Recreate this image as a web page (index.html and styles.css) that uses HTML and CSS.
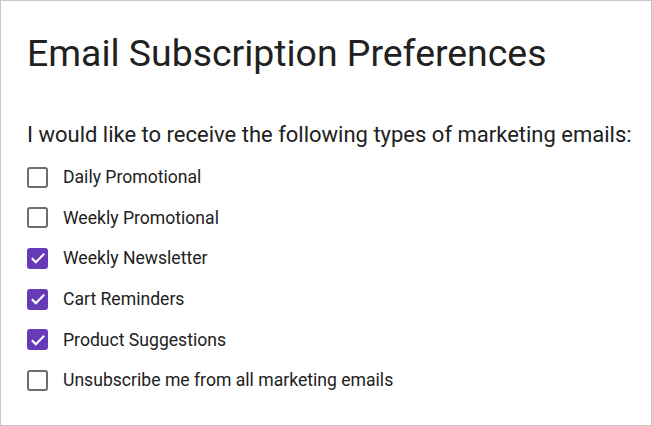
FILE: index.html
```html
<!doctype html>
<html>
<head>
<title>Email Subscription Preferences</title>
<link rel="stylesheet" href="styles.css">
</head>
<body>
<div class="frame">
  <h1 class="title">Email Subscription Preferences</h1>
  <p class="lead">I would like to receive the following types of marketing emails:</p>
  <ul class="options">
    <li class="option"><span class="box"></span>Daily Promotional</li>
    <li class="option"><span class="box"></span>Weekly Promotional</li>
    <li class="option"><span class="box checked"><svg viewBox="0 0 24 24"><path d="M4.6 12.2l4.8 4.8 10-10"/></svg></span>Weekly Newsletter</li>
    <li class="option"><span class="box checked"><svg viewBox="0 0 24 24"><path d="M4.6 12.2l4.8 4.8 10-10"/></svg></span>Cart Reminders</li>
    <li class="option"><span class="box checked"><svg viewBox="0 0 24 24"><path d="M4.6 12.2l4.8 4.8 10-10"/></svg></span>Product Suggestions</li>
    <li class="option"><span class="box"></span>Unsubscribe me from all marketing emails</li>
  </ul>
</div>
</body>
</html>
```
FILE: styles.css
```css
html, body {
  margin: 0;
  height: 100%;
}

body {
  font-family: Roboto, "Liberation Sans", sans-serif;
  color: #212121;
  background: #fff;
}

.frame {
  box-sizing: border-box;
  height: 426px;
  border: 1px solid #c8c8c8;
  padding: 30px 20px 0 26px;
}

.title {
  margin: 0;
  font-size: 37.4px;
  font-weight: 400;
  line-height: 44px;
}

.lead {
  margin: 46px 0 8px 0;
  font-size: 22px;
  line-height: 28px;
  white-space: nowrap;
}

.options {
  list-style: none;
  margin: 0;
  padding: 0;
}

.option {
  display: flex;
  align-items: center;
  height: 40.6px;
  font-size: 17.6px;
}

.box {
  box-sizing: border-box;
  width: 21px;
  height: 21px;
  margin-right: 15px;
  border: 2.6px solid #6e6e6e;
  border-radius: 3px;
  display: flex;
  align-items: center;
  justify-content: center;
}

.box.checked {
  background: #673ab7;
  border-color: #673ab7;
}

.box svg {
  width: 20px;
  height: 20px;
  flex: none;
  fill: none;
  stroke: #fff;
  stroke-width: 2.5;
}
```
